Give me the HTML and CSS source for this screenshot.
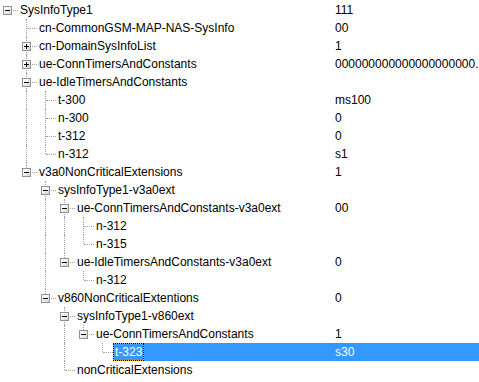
FILE: index.html
```html
<!DOCTYPE html>
<html lang="en">
<head>
    <meta charset="UTF-8">
    <title>SysInfoType1</title>
    <link rel="stylesheet" href="styles.css">
</head>
<body>

<div class="tree-view">
    <div class="row">
        <div class="tree"><span class="g root"><i class="box minus"></i></span><span class="label">SysInfoType1</span></div>
        <div class="val">111</div>
    </div>
    <div class="row">
        <div class="tree"><span class="g"></span><span class="g tee"></span><span class="label">cn-CommonGSM-MAP-NAS-SysInfo</span></div>
        <div class="val">00</div>
    </div>
    <div class="row">
        <div class="tree"><span class="g"></span><span class="g tee"><i class="box plus"></i></span><span class="label">cn-DomainSysInfoList</span></div>
        <div class="val">1</div>
    </div>
    <div class="row">
        <div class="tree"><span class="g"></span><span class="g tee"><i class="box plus"></i></span><span class="label">ue-ConnTimersAndConstants</span></div>
        <div class="val">000000000000000000000...</div>
    </div>
    <div class="row">
        <div class="tree"><span class="g"></span><span class="g tee"><i class="box minus"></i></span><span class="label">ue-IdleTimersAndConstants</span></div>
        <div class="val"></div>
    </div>
    <div class="row">
        <div class="tree"><span class="g"></span><span class="g line"></span><span class="g tee"></span><span class="label">t-300</span></div>
        <div class="val">ms100</div>
    </div>
    <div class="row">
        <div class="tree"><span class="g"></span><span class="g line"></span><span class="g tee"></span><span class="label">n-300</span></div>
        <div class="val">0</div>
    </div>
    <div class="row">
        <div class="tree"><span class="g"></span><span class="g line"></span><span class="g tee"></span><span class="label">t-312</span></div>
        <div class="val">0</div>
    </div>
    <div class="row">
        <div class="tree"><span class="g"></span><span class="g line"></span><span class="g elbow"></span><span class="label">n-312</span></div>
        <div class="val">s1</div>
    </div>
    <div class="row">
        <div class="tree"><span class="g"></span><span class="g elbow"><i class="box minus"></i></span><span class="label">v3a0NonCriticalExtensions</span></div>
        <div class="val">1</div>
    </div>
    <div class="row">
        <div class="tree"><span class="g"></span><span class="g"></span><span class="g tee"><i class="box minus"></i></span><span class="label">sysInfoType1-v3a0ext</span></div>
        <div class="val"></div>
    </div>
    <div class="row">
        <div class="tree"><span class="g"></span><span class="g"></span><span class="g line"></span><span class="g tee"><i class="box minus"></i></span><span class="label">ue-ConnTimersAndConstants-v3a0ext</span></div>
        <div class="val">00</div>
    </div>
    <div class="row">
        <div class="tree"><span class="g"></span><span class="g"></span><span class="g line"></span><span class="g line"></span><span class="g tee"></span><span class="label">n-312</span></div>
        <div class="val"></div>
    </div>
    <div class="row">
        <div class="tree"><span class="g"></span><span class="g"></span><span class="g line"></span><span class="g line"></span><span class="g elbow"></span><span class="label">n-315</span></div>
        <div class="val"></div>
    </div>
    <div class="row">
        <div class="tree"><span class="g"></span><span class="g"></span><span class="g line"></span><span class="g elbow"><i class="box minus"></i></span><span class="label">ue-IdleTimersAndConstants-v3a0ext</span></div>
        <div class="val">0</div>
    </div>
    <div class="row">
        <div class="tree"><span class="g"></span><span class="g"></span><span class="g line"></span><span class="g"></span><span class="g elbow"></span><span class="label">n-312</span></div>
        <div class="val"></div>
    </div>
    <div class="row">
        <div class="tree"><span class="g"></span><span class="g"></span><span class="g elbow"><i class="box minus"></i></span><span class="label">v860NonCriticalExtentions</span></div>
        <div class="val">0</div>
    </div>
    <div class="row">
        <div class="tree"><span class="g"></span><span class="g"></span><span class="g"></span><span class="g tee"><i class="box minus"></i></span><span class="label">sysInfoType1-v860ext</span></div>
        <div class="val"></div>
    </div>
    <div class="row">
        <div class="tree"><span class="g"></span><span class="g"></span><span class="g"></span><span class="g line"></span><span class="g elbow"><i class="box minus"></i></span><span class="label">ue-ConnTimersAndConstants</span></div>
        <div class="val">1</div>
    </div>
    <div class="row selected">
        <div class="tree"><span class="g"></span><span class="g"></span><span class="g"></span><span class="g line"></span><span class="g"></span><span class="g elbow"></span><span class="label"><span class="focus">t-323</span></span></div>
        <div class="val">s30</div>
    </div>
    <div class="row">
        <div class="tree"><span class="g"></span><span class="g"></span><span class="g"></span><span class="g elbow"></span><span class="label">nonCriticalExtensions</span></div>
        <div class="val"></div>
    </div>
</div>

</body>
</html>
```

FILE: styles.css
```css
body {
    margin: 0;
    padding-top: 1px;
    background-color: #ffffff;
    font-family: "Liberation Sans", Arial, sans-serif;
    font-size: 12px;
    color: #000000;
    overflow: hidden;
}
.tree-view {
    width: 479px;
}
.row {
    display: flex;
    height: 18px;
    line-height: 18px;
}
.tree {
    display: flex;
    width: 335px;
    flex: none;
}
.g {
    position: relative;
    width: 19px;
    flex: none;
}
.g.line::before,
.g.tee::before,
.g.elbow::before {
    content: '';
    position: absolute;
    left: 7px;
    top: 0;
    bottom: 0;
    border-left: 1px dotted #a0a0a0;
}
.g.elbow::before {
    bottom: auto;
    height: 9px;
}
.g.tee::after,
.g.elbow::after,
.g.root::after {
    content: '';
    position: absolute;
    left: 8px;
    width: 10px;
    top: 9px;
    border-top: 1px dotted #a0a0a0;
}
.box {
    position: absolute;
    left: 3px;
    top: 5px;
    width: 7px;
    height: 7px;
    border: 1px solid #919191;
    background: linear-gradient(135deg, #ffffff 20%, #d4d4d4);
    z-index: 1;
}
.box::before {
    content: '';
    position: absolute;
    left: 1px;
    top: 3px;
    width: 5px;
    height: 1px;
    background-color: #000000;
}
.box.plus::after {
    content: '';
    position: absolute;
    left: 3px;
    top: 1px;
    width: 1px;
    height: 5px;
    background-color: #000000;
}
.label {
    flex: 1;
    margin-left: -1px;
    padding-left: 2px;
    white-space: nowrap;
    overflow: hidden;
}
.val {
    flex: 1;
    white-space: nowrap;
    overflow: hidden;
}
.selected .label,
.selected .val {
    background-color: #3399ff;
    color: #ffffff;
}
.focus {
    display: inline-block;
    height: 18px;
    box-sizing: border-box;
    margin-left: -2px;
    padding: 0 1px;
    border: 1px solid #f0b030;
    outline: 1px dotted #000000;
    outline-offset: -1px;
    line-height: 16px;
}
```
